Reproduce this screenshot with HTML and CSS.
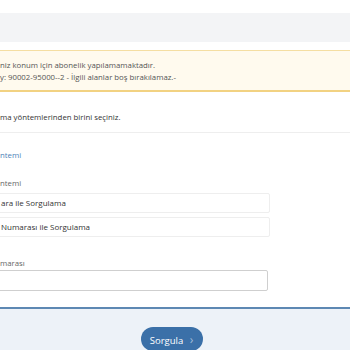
FILE: index.html
```html
<!DOCTYPE html>
<html lang="tr">
<head>
    <meta charset="UTF-8">
    <title>Abonelik Sorgulama</title>
    <link rel="stylesheet" href="styles.css">
</head>
<body>
    <div class="page">
        <div class="top-band"></div>

        <div class="alert">
            <p>niz konum için abonelik yapılamamaktadır.</p>
            <p>y: 90002-95000--2 - İlgili alanlar boş bırakılamaz.-</p>
        </div>

        <p class="intro">ma yöntemlerinden birini seçiniz.</p>

        <div class="form">
            <a class="method-link" href="#">ntemi</a>

            <label class="field-label">ntemi</label>
            <div class="option">ara ile Sorgulama</div>
            <div class="option">Numarası ile Sorgulama</div>

            <label class="field-label second">marası</label>
            <input type="text" class="text-input">
        </div>

        <div class="footer">
            <button class="btn-query">Sorgula <span class="chev">&#8250;</span></button>
        </div>
    </div>
</body>
</html>
```

FILE: styles.css
```css
body {
    margin: 0;
    padding: 0;
    font-family: 'Open Sans', sans-serif;
    font-size: 7.8px;
    color: #444;
    background: #fff;
    overflow: hidden;
}
.page {
    margin-left: -10px;
    padding-top: 13px;
    height: 350px;
    display: flex;
    flex-direction: column;
}
.top-band {
    height: 29px;
    background: #f3f4f6;
}
.alert {
    margin-top: 8px;
    height: 39px;
    padding: 0 10px;
    background: #fffaee;
    border-top: 1px solid #f5dea2;
    border-bottom: 2px solid #f2d282;
    display: flex;
    flex-direction: column;
    justify-content: center;
}
.alert p {
    margin: 0;
    line-height: 12px;
    color: #555;
}
.intro {
    margin: 0;
    padding: 19px 10px 9px;
    line-height: 12px;
    color: #333;
    border-bottom: 1px solid #eeeeee;
}
.form {
    padding: 16px 0 0 10px;
    display: flex;
    flex-direction: column;
    align-items: flex-start;
}
.method-link {
    color: #4d7fb8;
    text-decoration: none;
    line-height: 12px;
}
.field-label {
    margin-top: 16px;
    line-height: 12px;
    color: #666;
}
.field-label.second {
    margin-top: 20px;
}
.option {
    box-sizing: border-box;
    width: 280px;
    height: 20px;
    margin: -10px 0 0 -10px;
    padding-left: 10px;
    line-height: 18px;
    font-size: 8px;
    border: 1px solid #eeeeee;
    border-radius: 2px;
    color: #333;
}
.option:first-of-type {
    margin-top: 4px;
}
.option + .option {
    margin-top: 4px;
}
.text-input {
    box-sizing: border-box;
    width: 278px;
    height: 21px;
    margin: 1px 0 0 -10px;
    border: 1px solid #cfcfcf;
    border-radius: 2px;
}
.footer {
    margin-top: 16px;
    flex: 1;
    background: #edf2f8;
    border-top: 2px solid #5d88b3;
    display: flex;
    justify-content: center;
    padding-top: 18px;
    padding-left: 3px;
}
.btn-query {
    height: 24px;
    width: 62px;
    border: none;
    border-radius: 12px;
    background: #3b70a8;
    color: #fff;
    font-family: 'Open Sans', sans-serif;
    font-size: 9.5px;
    padding: 0;
}
.btn-query .chev {
    color: #9fbbd9;
    margin-left: 4px;
    font-size: 12px;
}
```
